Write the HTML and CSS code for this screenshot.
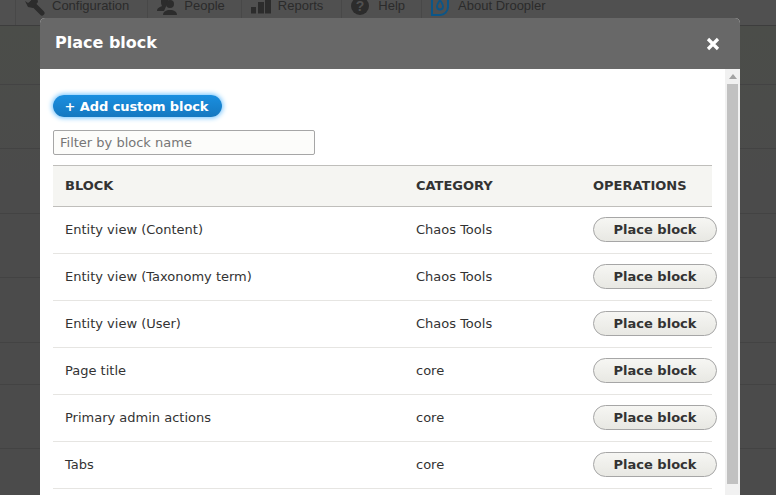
FILE: index.html
```html
<!DOCTYPE html>
<html lang="en">
<head>
  <meta charset="UTF-8">
  <title>Place block</title>
  <link rel="stylesheet" href="styles.css">
</head>
<body>
  <!-- Admin toolbar behind the overlay -->
  <nav class="toolbar">
    <a class="tool"><svg width="27" height="18" viewBox="0 0 27 18"><path d="M7 3l10 10" stroke="#2c2c2c" stroke-width="5" stroke-linecap="round"/><path d="M0 1l3 2 3-2 0-5 6 0 1 6-5 6-5-1z" fill="#2c2c2c"/></svg>Configuration</a>
    <a class="tool tool-tight"><svg width="27" height="18" viewBox="0 0 27 18"><path d="M0 11c0-3 3-4 5-5-1-2-1-3-1-5 0-2 1-3 2-4h5v5L7 11z" fill="#2c2c2c"/><circle cx="13" cy="4" r="4" fill="#2c2c2c"/><path d="M6 15c0-3 2-4 5-5h4c3 1 5 2 5 5z" fill="#2c2c2c"/></svg>People</a>
    <a class="tool"><svg width="27" height="18" viewBox="0 0 27 18"><path d="M0 7h5v6.500H0zM7 2h6v11.500H7zM14 0h6v13.500h-6z" fill="#2c2c2c"/></svg>Reports</a>
    <a class="tool tool-tight"><svg width="27" height="18" viewBox="0 0 27 18"><circle cx="9" cy="6" r="9" fill="#2c2c2c"/><text x="9" y="11" class="help-mark">?</text></svg>Help</a>
    <a class="tool"><svg width="27" height="18" viewBox="0 0 27 18"><path d="M1 -2v17h8a8 8 0 0 0 8-8V-2" fill="none" stroke="#0b5688" stroke-width="2"/><path d="M9 0c2 3 3 4.500 3 6.500a3 3 0 0 1-6 0C6 4.500 7 3 9 0z" fill="none" stroke="#0b5688" stroke-width="1.800"/></svg>About Droopler</a>
  </nav>
  <div class="page-rows">
    <div class="page-row"></div>
    <div class="page-row"></div>
    <div class="page-row"></div>
    <div class="page-row"></div>
    <div class="page-row"></div>
    <div class="page-row"></div>
    <div class="page-row"></div>
  </div>

  <div class="dialog">
    <header class="dialog-title">
      <h1>Place block</h1>
      <svg class="close" width="14" height="14" viewBox="0 0 14 14"><path d="M2 2l10 10M12 2L2 12" stroke="#fff" stroke-width="3.200"/></svg>
    </header>
    <div class="dialog-body">
      <div class="dialog-content">
        <a class="add-block">+ Add custom block</a>
        <input class="filter" type="text" placeholder="Filter by block name">
        <table class="blocks">
          <thead>
            <tr><th class="col-block">Block</th><th class="col-cat">Category</th><th>Operations</th></tr>
          </thead>
          <tbody>
            <tr><td>Entity view (Content)</td><td>Chaos Tools</td><td><button class="place">Place block</button></td></tr>
            <tr><td>Entity view (Taxonomy term)</td><td>Chaos Tools</td><td><button class="place">Place block</button></td></tr>
            <tr><td>Entity view (User)</td><td>Chaos Tools</td><td><button class="place">Place block</button></td></tr>
            <tr><td>Page title</td><td>core</td><td><button class="place">Place block</button></td></tr>
            <tr><td>Primary admin actions</td><td>core</td><td><button class="place">Place block</button></td></tr>
            <tr><td>Tabs</td><td>core</td><td><button class="place">Place block</button></td></tr>
          </tbody>
        </table>
      </div>
      <div class="scrollbar">
        <span class="arrow"></span>
        <span class="thumb"></span>
      </div>
    </div>
  </div>
</body>
</html>
```

FILE: styles.css
```css
/* Base styles */
html, body {
  height: 100%;
}
body {
  margin: 0;
  background-color: #4b4b4b;
  font-family: "DejaVu Sans", sans-serif;
  color: #333;
  overflow: hidden;
  position: relative;
}

/* Toolbar behind the overlay */
.toolbar {
  display: flex;
  height: 25px;
  padding-left: 15px;
  background-color: #505050;
  border-bottom: 1px solid #3d3d3d;
  overflow: hidden;
}
.tool {
  display: flex;
  align-items: flex-start;
  padding: 0 18px 0 9px;
  border-left: 1px solid #484848;
  font-family: "Liberation Sans", sans-serif;
  font-size: 13px;
  line-height: 12px;
  color: #2b2b2b;
}
.tool-tight {
  padding-right: 16px;
}
.tool svg {
  flex: none;
}
.help-mark {
  font-family: "Liberation Sans", sans-serif;
  font-size: 14px;
  font-weight: bold;
  text-anchor: middle;
  fill: #505050;
}

/* Page content rows */
.page-rows {
  display: grid;
  grid-template-rows: 59px 64px 65px 64px 65px 42px 64px;
  background: linear-gradient(#4b4d49, #4b4b4b 160px);
}
.page-row {
  border-bottom: 1px solid #434343;
}

/* Dialog */
.dialog {
  position: absolute;
  top: 18px;
  left: 40px;
  width: 700px;
  height: 490px;
  background-color: #fff;
  border-radius: 5px 5px 0 0;
  overflow: hidden;
}
.dialog-title {
  display: flex;
  align-items: center;
  justify-content: space-between;
  box-sizing: border-box;
  height: 51px;
  padding: 0 20px 2px 15px;
  background-color: #686868;
}
.dialog-title h1 {
  margin: 0;
  font-size: 16px;
  font-weight: bold;
  color: #fff;
}
.dialog-title .close {
  margin-top: 2px;
}
.dialog-body {
  display: flex;
}
.dialog-content {
  flex: 1;
  padding: 26px 0 0 13px;
}
.scrollbar {
  flex: none;
  display: flex;
  flex-direction: column;
  align-items: center;
  width: 15px;
  height: 440px;
  background-color: #f1f1f1;
}
.scrollbar .arrow {
  margin-top: 5px;
  border: 4px solid transparent;
  border-top: 0;
  border-bottom: 5px solid #a3a3a3;
}
.scrollbar .thumb {
  width: 11px;
  height: 400px;
  margin-top: 5px;
  background-color: #c1c1c1;
}

/* Add button and filter */
.add-block {
  display: block;
  box-sizing: border-box;
  width: 169px;
  height: 22px;
  padding-right: 2px;
  border-radius: 11px;
  background: linear-gradient(#1a8fe0, #1578c0);
  box-shadow: 0 0 5px 1px #6fc3ff;
  font-size: 13px;
  font-weight: bold;
  line-height: 24px;
  letter-spacing: -0.1px;
  text-align: center;
  color: #fff;
}
.filter {
  display: block;
  box-sizing: border-box;
  width: 262px;
  height: 25px;
  margin-top: 13px;
  padding: 0 6px;
  border: 1px solid #a6a6a6;
  border-radius: 2px;
  background-color: #fcfcfa;
  font-family: "DejaVu Sans", sans-serif;
  font-size: 13px;
}
.filter::placeholder {
  color: #767676;
  opacity: 1;
}

/* Block table */
.blocks {
  width: 659px;
  margin-top: 10px;
  border-collapse: collapse;
  table-layout: fixed;
  font-size: 13px;
}
.blocks th {
  height: 38px;
  padding: 0 0 2px 12px;
  background-color: #f5f5f2;
  border-top: 1px solid #bfbebb;
  border-bottom: 1px solid #bfbebb;
  font-size: 13px;
  font-weight: bold;
  text-align: left;
  text-transform: uppercase;
}
.blocks .col-block {
  width: 340px;
}
.blocks .col-cat {
  width: 165px;
  padding-left: 11px;
}
.blocks td {
  height: 44px;
  padding: 0 0 2px 12px;
  border-bottom: 1px solid #e6e5e2;
  white-space: nowrap;
}
.blocks td:nth-child(2) {
  padding-left: 11px;
}
.place {
  display: block;
  box-sizing: border-box;
  width: 124px;
  height: 25px;
  padding: 0;
  border: 1px solid #a6a6a6;
  border-radius: 13px;
  background: linear-gradient(#f6f6f3, #e8e8e3);
  font-family: "DejaVu Sans", sans-serif;
  font-size: 13px;
  font-weight: bold;
  color: #333;
}
```
